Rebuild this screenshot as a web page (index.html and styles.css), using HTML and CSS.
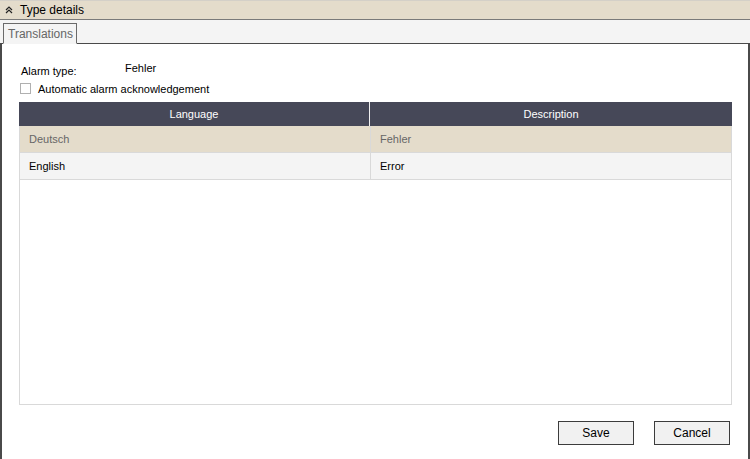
FILE: index.html
```html
<!DOCTYPE html>
<html lang="en">
<head>
    <meta charset="UTF-8">
    <title>Type details</title>
    <link rel="stylesheet" href="styles.css">
</head>
<body>
    <div class="section-header">
        <svg class="collapse-icon" width="8" height="8" viewBox="0 0 8 8">
            <path d="M1 4 L4 1 L7 4 M1 7 L4 4 L7 7" fill="none" stroke="#222" stroke-width="1.2"/>
        </svg>
        <span>Type details</span>
    </div>

    <div class="tab-strip">
        <div class="tab active">Translations</div>
    </div>

    <div class="tab-page">
        <div class="field-row">
            <span class="field-label">Alarm type:</span>
            <span class="field-value">Fehler</span>
        </div>
        <label class="check-row">
            <span class="checkbox"></span>
            Automatic alarm acknowledgement
        </label>

        <div class="grid">
            <div class="grid-head">
                <div class="cell">Language</div>
                <div class="cell">Description</div>
            </div>
            <div class="grid-row selected">
                <div class="cell">Deutsch</div>
                <div class="cell">Fehler</div>
            </div>
            <div class="grid-row">
                <div class="cell">English</div>
                <div class="cell">Error</div>
            </div>
        </div>

        <div class="buttons">
            <button class="btn">Save</button>
            <button class="btn">Cancel</button>
        </div>
    </div>
</body>
</html>
```

FILE: styles.css
```css
* {
    margin: 0;
    padding: 0;
    box-sizing: border-box;
    font-family: Tahoma, 'Liberation Sans', Arial, sans-serif;
}

body {
    width: 750px;
    height: 459px;
    background-color: #ffffff;
    font-size: 12px;
    color: #000;
    overflow: hidden;
}

.section-header {
    height: 20px;
    display: flex;
    align-items: center;
    gap: 7px;
    padding-left: 5px;
    background-color: #e4dccb;
    border-top: 1px solid #d4d0c8;
    border-bottom: 1px solid #7a7a7a;
    font-size: 12px;
}

.collapse-icon {
    flex-shrink: 0;
}

.tab-strip {
    height: 24px;
    display: flex;
    align-items: flex-end;
    padding-left: 3px;
    background-color: #f4f4f4;
    border-bottom: 1px solid #4a4a4a;
}

.tab {
    height: 21px;
    padding: 3px 3px 0 4px;
    margin-bottom: -1px;
    border: 1px solid #6a6a6a;
    border-bottom: none;
    color: #666;
    font-size: 12px;
}

.tab.active {
    background-color: #f4f4f4;
    border-bottom: 1px solid #f4f4f4;
}

.tab-page {
    height: 415px;
    border-left: 2px solid #4a4a4a;
    border-right: 2px solid #4a4a4a;
    padding: 18px 15px 0 17px;
}

.field-row {
    display: flex;
    height: 19px;
    font-size: 11px;
}

.field-label {
    width: 106px;
    padding-top: 3px;
    padding-left: 2px;
}

.check-row {
    display: flex;
    align-items: center;
    gap: 7px;
    height: 15px;
    padding-left: 1px;
    font-size: 11px;
}

.checkbox {
    width: 11px;
    height: 11px;
    border: 1px solid #b0b0b0;
    background-color: #fff;
}

.grid {
    margin-top: 6px;
    height: 303px;
    margin-right: 1px;
    border: 1px solid #d9d9d9;
    font-size: 11px;
}

.grid-head,
.grid-row {
    display: grid;
    grid-template-columns: 351px 1fr;
}

.grid-head {
    height: 24px;
    margin: -1px -1px 0 -1px;
    background-color: #464858;
    color: #fff;
}

.grid-head .cell {
    display: flex;
    align-items: center;
    justify-content: center;
    border-right: 1px solid #f0f0f0;
}

.grid-head .cell:last-child {
    border-right: none;
}

.grid-row {
    height: 27px;
    background-color: #f4f4f4;
    border-bottom: 1px solid #d9d9d9;
}

.grid-row.selected {
    background-color: #e4dccb;
    color: #666;
}

.grid-row .cell {
    display: flex;
    align-items: center;
    padding-left: 9px;
    border-right: 1px solid #d9d9d9;
}

.grid-row .cell:last-child {
    border-right: none;
}

.buttons {
    display: flex;
    justify-content: flex-end;
    gap: 20px;
    margin-top: 16px;
    padding-right: 3px;
}

.btn {
    width: 76px;
    height: 24px;
    background-color: #f1f1f1;
    border: 1px solid #3c3c3c;
    font-size: 12px;
    color: #000;
}
```
